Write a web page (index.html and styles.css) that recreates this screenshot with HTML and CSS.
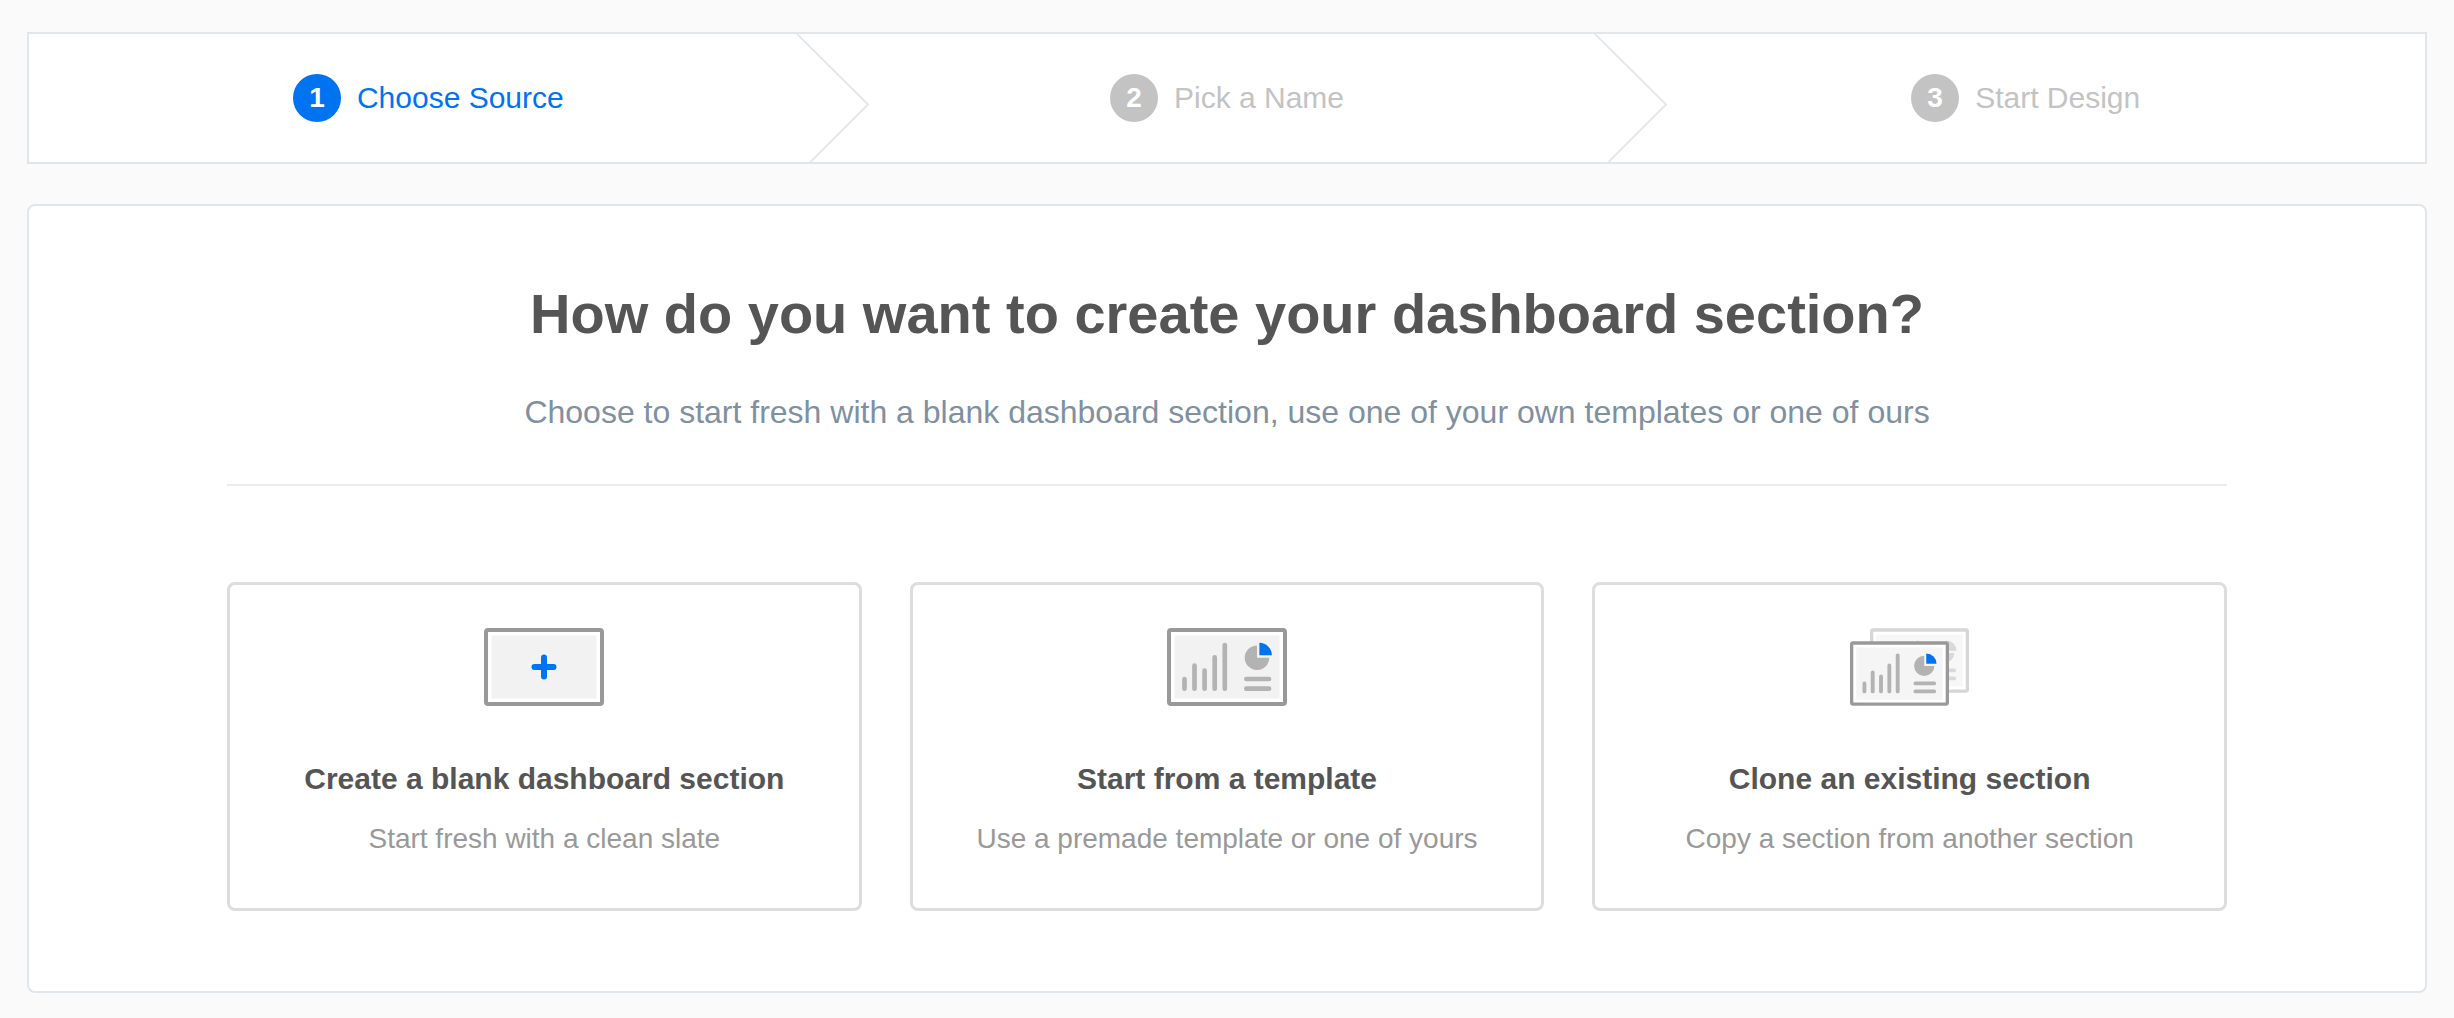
FILE: index.html
```html
<!DOCTYPE html>
<html lang="en">
<head>
  <meta charset="utf-8">
  <meta name="viewport" content="width=device-width, initial-scale=1">
  <title>Create dashboard section</title>
  <link rel="stylesheet" href="styles.css">
</head>
<body>
  <svg class="icon-defs" aria-hidden="true">
    <symbol id="dashboard" viewBox="0 0 120 78">
      <rect class="frame" x="2" y="2" width="116" height="74" rx="2"/>
      <rect class="canvas" x="7.5" y="7.5" width="105" height="63"/>
      <path class="bars" d="M17.5 51v9.7M27.5 37.7v23M37.6 42.7v18M47.7 29.3v31.4M57.8 17v43.7M79.3 51h22.7M79.3 60.7h22.7"/>
      <path class="pie" d="M90 29.8V17.4a12.3 12.3 0 1 0 12.3 12.4z"/>
      <path class="slice" d="M92.4 27.3V14.8a12.6 12.6 0 0 1 12.5 12.5z"/>
    </symbol>
  </svg>

  <nav aria-label="Progress">
    <ol class="steps">
      <li class="step step-active" aria-current="step">
        <span class="step-number">1</span>
        <span class="step-label">Choose Source</span>
        <svg class="chevron" viewBox="0 0 74 128" aria-hidden="true"><path d="M1 -1L73 70.5L14.5 129"/></svg>
      </li>
      <li class="step">
        <span class="step-number">2</span>
        <span class="step-label">Pick a Name</span>
        <svg class="chevron" viewBox="0 0 74 128" aria-hidden="true"><path d="M1 -1L73 70.5L14.5 129"/></svg>
      </li>
      <li class="step">
        <span class="step-number">3</span>
        <span class="step-label">Start Design</span>
      </li>
    </ol>
  </nav>

  <main class="panel">
    <div class="content">
      <header class="intro">
        <h1>How do you want to create your dashboard section?</h1>
        <p>Choose to start fresh with a blank dashboard section, use one of your own templates or one of ours</p>
      </header>
      <div class="options">
        <button class="option" type="button">
          <svg class="option-icon" viewBox="0 0 120 78" aria-hidden="true">
            <rect class="frame" x="2" y="2" width="116" height="74" rx="2"/>
            <rect class="canvas" x="7.5" y="7.5" width="105" height="63"/>
            <path class="plus" d="M60 29.5v19M50.5 39h19"/>
          </svg>
          <span class="option-title">Create a blank dashboard section</span>
          <span class="option-text">Start fresh with a clean slate</span>
        </button>
        <button class="option" type="button">
          <svg class="option-icon" viewBox="0 0 120 78" aria-hidden="true"><use href="#dashboard"/></svg>
          <span class="option-title">Start from a template</span>
          <span class="option-text">Use a premade template or one of yours</span>
        </button>
        <button class="option" type="button">
          <svg class="option-icon" viewBox="0 0 120 78" aria-hidden="true">
            <use class="back-copy" href="#dashboard" x="20" y="0" width="99" height="65"/>
            <use class="front-copy" href="#dashboard" x="0" y="13" width="99" height="65"/>
          </svg>
          <span class="option-title">Clone an existing section</span>
          <span class="option-text">Copy a section from another section</span>
        </button>
      </div>
    </div>
  </main>
</body>
</html>
```
FILE: styles.css
```css
* {
  box-sizing: border-box;
}

body {
  margin: 0;
  padding: 32px 27px 24px;
  background: #fafafa;
  color: #555;
  font-family: Arial, "Liberation Sans", sans-serif;
}

.icon-defs {
  position: absolute;
  width: 0;
  height: 0;
}

/* Progress steps */
.steps {
  display: grid;
  grid-template-columns: repeat(3, 1fr);
  margin: 0 0 40px;
  padding: 0;
  list-style: none;
  background: #fff;
  border: 2px solid #e1e6ea;
}

.step {
  position: relative;
  display: flex;
  align-items: center;
  justify-content: center;
  gap: 16px;
  padding: 40px 0;
  color: #c3c3c3;
  font-size: 30px;
  line-height: 36px;
}

.step-number {
  width: 48px;
  border-radius: 50%;
  background: #c3c3c3;
  color: #fff;
  font-size: 28px;
  font-weight: bold;
  line-height: 48px;
  text-align: center;
}

.step-active {
  color: #0073f0;
}

.step-active .step-number {
  background: #0073f0;
}

.chevron {
  position: absolute;
  top: 0;
  right: -41px;
  width: 74px;
  height: 100%;
  fill: none;
  stroke: #e5e8ea;
  stroke-width: 2;
}

/* Main panel */
.panel {
  padding: 76px 32px 80px;
  background: #fff;
  border: 2px solid #e1e6ea;
  border-radius: 8px;
}

.content {
  max-width: 2000px;
  margin: 0 auto;
}

.intro {
  margin-bottom: 96px;
  padding-bottom: 52px;
  border-bottom: 2px solid #ececf0;
  text-align: center;
}

.intro h1 {
  margin: 0 0 46px;
  font-size: 56px;
  line-height: 64px;
}

.intro p {
  margin: 0;
  color: #8090a0;
  font-size: 32px;
  line-height: 40px;
}

/* Option cards */
.options {
  display: grid;
  grid-template-columns: repeat(3, 1fr);
  gap: 48px;
}

.option {
  display: flex;
  flex-direction: column;
  align-items: center;
  padding: 43px 24px 53px;
  background: #fff;
  border: 3px solid #ddd;
  border-radius: 8px;
  color: inherit;
  font-family: inherit;
  cursor: pointer;
}

.option-icon {
  width: 120px;
  height: 78px;
  margin-bottom: 55px;
  --frame: #999;
  --canvas: #f2f2f2;
  --marks: #b3b3b3;
  --accent: #0073f0;
}

.option-title {
  margin-bottom: 26px;
  font-size: 30px;
  font-weight: bold;
  line-height: 36px;
}

.option-text {
  color: #999;
  font-size: 28px;
  line-height: 32px;
}

/* Icon parts */
.frame {
  fill: #fff;
  stroke: var(--frame);
  stroke-width: 4;
}

.canvas {
  fill: var(--canvas);
}

.bars {
  fill: none;
  stroke: var(--marks);
  stroke-width: 4.7;
  stroke-linecap: round;
}

.pie {
  fill: var(--marks);
}

.slice {
  fill: var(--accent);
  stroke: none;
}

.plus {
  fill: none;
  stroke: var(--accent);
  stroke-width: 6;
  stroke-linecap: round;
}

.front-copy {
  --canvas: #f5f5f5;
}

.back-copy {
  --frame: #d6d6d6;
  --canvas: #f7f7f7;
  --marks: #d9d9d9;
  --accent: #d9d9d9;
}
```
